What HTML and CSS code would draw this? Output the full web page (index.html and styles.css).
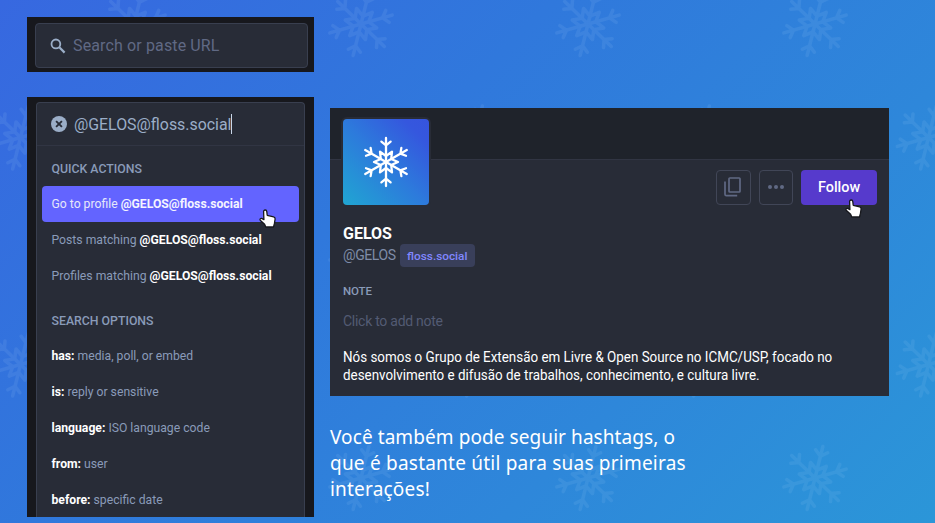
FILE: index.html
```html
<!DOCTYPE html>
<html lang="pt-BR">
<head>
<meta charset="utf-8">
<title>GELOS</title>
<link rel="stylesheet" href="styles.css">
</head>
<body>
<svg class="backdrop" width="935" height="523" aria-hidden="true">
  <defs>
    <g id="flake" fill="none" stroke-linecap="round" stroke-linejoin="round">
      <g id="arm"><path d="M0 0V-24M-4.6 -20.4L0 -16.6L4.6 -20.4"/></g>
      <use href="#arm" transform="rotate(60)"/><use href="#arm" transform="rotate(120)"/>
      <use href="#arm" transform="rotate(180)"/><use href="#arm" transform="rotate(240)"/>
      <use href="#arm" transform="rotate(300)"/>
      <path d="M0 -6L6 -10.4L5.2 -3L12 0L5.2 3L6 10.4L0 6L-6 10.4L-5.2 3L-12 0L-5.2 -3L-6 -10.4Z"/>
    </g>
    <path id="hand" d="M6.2 1C7.2 1 7.7 1.7 7.8 2.6L8.2 6.3L14.6 7.8C15.8 8.1 16.2 9 16.1 10L15.5 14.2L14.5 18H6.8L5.6 15.3L1.2 11.2C.6 10.3 1.4 9.2 2.7 9.4L4.9 10.6L4.6 2.6C4.6 1.7 5.2 1 6.2 1Z" fill="#fff" stroke="#16171c" stroke-width="1.3" stroke-linejoin="round"/>
    <pattern id="snow" width="227" height="227" patternUnits="userSpaceOnUse" x="77" y="-33">
      <g stroke="#9cc8f2" stroke-width="2.6">
      <use href="#flake" transform="translate(57 57) rotate(14) scale(1.35)"/>
      <use href="#flake" transform="translate(170.5 170.5) rotate(14) scale(1.35)"/>
      </g>
    </pattern>
  </defs>
  <rect width="935" height="523" fill="url(#snow)" opacity=".12"/>
</svg>
<main class="page">
  <div class="left">
    <section class="search-frame">
      <div class="search-box">
        <svg class="magnifier" width="16" height="16" viewBox="0 0 16 16" fill="none" stroke="#9baec8"><circle cx="5.9" cy="5.9" r="4.4" stroke-width="1.8"/><path d="M9.3 9.3L14.6 14.6" stroke-width="2.2"/></svg>
        <span>Search or paste URL</span>
      </div>
    </section>
    <section class="results-frame">
      <div class="results">
        <div class="query">
          <svg width="16" height="16" viewBox="0 0 16 16"><circle cx="8" cy="8" r="8" fill="#9baec8"/><path d="M5.1 5.1L10.9 10.9M10.9 5.1L5.1 10.9" stroke="#282c37" stroke-width="1.9"/></svg>
          <span class="query-text">@GELOS@floss.social</span><i class="caret"></i>
        </div>
        <h4>QUICK ACTIONS</h4>
        <div class="option active">Go to profile <b>@GELOS@floss.social</b><svg class="hand hand-search" width="18" height="19"><use href="#hand"/></svg></div>
        <div class="option">Posts matching <b>@GELOS@floss.social</b></div>
        <div class="option">Profiles matching <b>@GELOS@floss.social</b></div>
        <h4 class="second">SEARCH OPTIONS</h4>
        <div class="option"><b>has:</b> media, poll, or embed</div>
        <div class="option"><b>is:</b> reply or sensitive</div>
        <div class="option"><b>language:</b> ISO language code</div>
        <div class="option"><b>from:</b> user</div>
        <div class="option"><b>before:</b> specific date</div>
      </div>
    </section>
  </div>
  <div class="right">
    <section class="profile">
      <div class="banner"></div>
      <div class="profile-body">
        <div class="top-row">
          <svg class="avatar" width="90" height="90" viewBox="0 0 90 90">
            <defs><linearGradient id="av" x1="0" y1="1" x2="1" y2="0"><stop offset="0" stop-color="#20a6d2"/><stop offset=".5" stop-color="#2d79dc"/><stop offset=".85" stop-color="#3557de"/><stop offset="1" stop-color="#3654dd"/></linearGradient></defs>
            <rect width="90" height="90" rx="6" fill="#282c37"/>
            <rect x="2" y="2" width="86" height="86" rx="4" fill="url(#av)"/>
            <use href="#flake" x="45" y="45" stroke="#fff" stroke-width="2.3"/>
          </svg>
          <div class="actions">
            <button class="icon-btn"><svg width="18" height="20" viewBox="0 0 18 20" fill="none" stroke="#606984" stroke-width="1.7"><rect x="5" y="1" width="11" height="14" rx=".8"/><path d="M1 4.5V17.2Q1 18.6 2.4 18.6H13.2"/></svg></button>
            <button class="icon-btn"><svg width="16" height="4" fill="#606984"><circle cx="2" cy="2" r="2"/><circle cx="8" cy="2" r="2"/><circle cx="14" cy="2" r="2"/></svg></button>
            <button class="follow">Follow<svg class="hand hand-follow" width="18" height="19"><use href="#hand"/></svg></button>
          </div>
        </div>
        <h1>GELOS</h1>
        <div class="account"><span class="handle">@GELOS</span><span class="domain">floss.social</span></div>
        <h5>NOTE</h5>
        <div class="note">Click to add note</div>
        <p class="bio">Nós somos o Grupo de Extensão em Livre &amp; Open Source no ICMC/USP, focado no<br>desenvolvimento e difusão de trabalhos, conhecimento, e cultura livre.</p>
      </div>
    </section>
    <p class="caption"><span class="c1">Você também pode seguir hashtags, o</span><br><span class="c2">que é bastante útil para suas primeiras</span><br><span class="c3">interações!</span></p>
  </div>
</main>
</body>
</html>
```

FILE: styles.css
```css
* { box-sizing: border-box; }
body {
  margin: 0;
  width: 935px;
  height: 523px;
  overflow: hidden;
  font-family: Roboto, "Liberation Sans", sans-serif;
  background: linear-gradient(135deg, #3768e0 0%, #3078dc 38%, #2e87da 70%, #2b96d8 100%);
}
h1, h4, h5, p { margin: 0; }
.backdrop { position: absolute; top: 0; left: 0; }
.page { position: relative; display: flex; gap: 16px; padding: 17px 0 0 27px; }
.left { width: 287px; display: flex; flex-direction: column; gap: 25px; }
.search-frame { height: 55px; padding: 6px 6px 3px 8px; background: #17181d; }
.search-box {
  height: 45px;
  display: flex;
  align-items: center;
  gap: 7px;
  padding-left: 14px;
  border: 1px solid #393f4f;
  border-radius: 4px;
  background: #282c37;
  color: #606984;
  font-size: 16px;
  letter-spacing: .13px;
}
.results-frame { height: 420px; padding: 5px 9px 0; background: #17181d; }
.results {
  height: 415px;
  padding: 0 5px;
  border: 1px solid #393f4f;
  border-width: 1px 1px 0;
  border-radius: 4px 4px 0 0;
  background: #282c37;
  color: #8a9bb9;
}
.query {
  height: 43px;
  margin: 0 -5px;
  padding-left: 14px;
  display: flex;
  align-items: center;
  border-bottom: 1px solid #313543;
  color: #9baec8;
  font-size: 15.9px;
}
.query-text { margin-left: 7px; }
.caret { width: 1px; height: 20px; background: #c9d6e8; }
h4 { height: 40px; padding: 14px 9.5px 0; font-size: 12.3px; line-height: 18px; font-weight: 500; }
h4.second { height: 45px; padding-top: 19px; }
.option {
  position: relative;
  height: 35.8px;
  padding: 0 9px 0 9.5px;
  line-height: 36px;
  font-size: 12.2px;
  white-space: nowrap;
}
.option b { color: #fff; font-weight: 700; }
.active { background: #6364ff; color: #e5e7fa; border-radius: 4px; }
.active b { color: #f4f4ff; }
.hand { position: absolute; overflow: visible; }
.hand-search { left: 217px; top: 23px; }
.right { width: 559px; padding-top: 91px; }
.profile { height: 287.5px; background: #282c37; }
.banner { height: 52px; background: #1f232b; border-bottom: 1px solid #313543; }
.profile-body { padding: 0 12px 0 13px; }
.top-row { display: flex; justify-content: space-between; height: 59px; margin-left: -2px; }
.avatar { margin-top: -43px; }
.actions { display: flex; gap: 8px; padding-top: 9.5px; }
.icon-btn, .follow { height: 35px; border-radius: 4px; padding: 0; display: flex; align-items: center; justify-content: center; }
.icon-btn { width: 34.5px; border: 1px solid #414657; background: none; }
.follow { position: relative; width: 76px; border: 0; background: #563acc; color: #fff; font: 500 14.4px Roboto, sans-serif; }
.hand-follow { left: 44px; top: 29px; }
h1 { margin-top: 5px; color: #fff; font-size: 16px; line-height: 20px; font-weight: 700; }
.account { display: flex; align-items: center; height: 22px; gap: 4px; color: #7f8ca8; font-size: 14px; }
.handle { letter-spacing: -.42px; }
.domain { height: 23px; padding: 0 7.5px; border-radius: 4px; background: #393f5a; color: #8187ff; font-size: 11.8px; line-height: 24px; font-weight: 500; }
h5 { margin-top: 17px; font-size: 11.5px; line-height: 16px; font-weight: 500; color: #8a9bb9; letter-spacing: -.1px; }
.note { margin-top: 13px; font-size: 14px; line-height: 18px; color: #535b73; letter-spacing: -.27px; }
.bio {
  width: 511px;
  margin-top: 19px;
  color: #fff;
  font-size: 14px;
  line-height: 17.5px;
  white-space: nowrap;
  transform: scaleX(.957);
  transform-origin: 0 0;
}
.caption { margin-top: 28.5px; color: #fff; font-family: "Noto Sans", "Open Sans", sans-serif; font-size: 19px; line-height: 26px; white-space: nowrap; }
.c1 { letter-spacing: .08px; }
.c2 { letter-spacing: .22px; }
.c3 { letter-spacing: .2px; }
```
